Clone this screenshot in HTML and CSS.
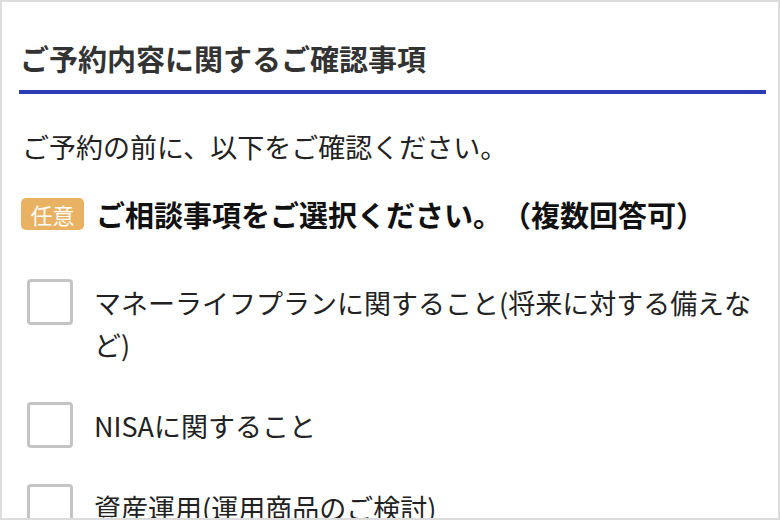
FILE: index.html
```html
<!DOCTYPE html>
<html lang="ja">
  <head>
    <meta charset="UTF-8" />
    <meta name="viewport" content="width=device-width, initial-scale=1.0" />
    <title>ご予約内容に関するご確認事項</title>
    <link rel="stylesheet" href="styles.css">
  </head>

  <body>
    <div class="page">
      <h2 class="title">ご予約内容に関するご確認事項</h2>

      <p class="intro">ご予約の前に、以下をご確認ください。</p>

      <div class="question">
        <span class="badge">任意</span>
        <span class="question-text">ご相談事項をご選択ください。（複数回答可）</span>
      </div>

      <div class="options">
        <label class="option">
          <input type="checkbox" class="check" />
          <span class="option-text">マネーライフプランに関すること(将来に対する備えなど)</span>
        </label>
        <label class="option">
          <input type="checkbox" class="check" />
          <span class="option-text">NISAに関すること</span>
        </label>
        <label class="option">
          <input type="checkbox" class="check" />
          <span class="option-text">資産運用(運用商品のご検討)</span>
        </label>
      </div>
    </div>
  </body>
</html>
```

FILE: styles.css
```css
/* 기본 스타일 */
* {
  box-sizing: border-box;
  margin: 0;
  padding: 0;
}

body {
  font-family: "Noto Sans CJK JP", "Noto Sans", sans-serif;
  color: #222;
  background: #fff;
  text-spacing-trim: space-all;
}

/* 바깥 틀 */
.page {
  width: 780px;
  height: 520px;
  border: 2px solid #dcdcdc;
  padding: 35px 12px 0 17px;
  overflow: hidden;
}

/* 제목 */
.title {
  font-size: 29px;
  line-height: 42px;
  font-weight: 700;
  color: #333;
  padding-left: 1px;
  padding-bottom: 11px;
  border-bottom: 4px solid #2b3cb6;
}

.intro {
  margin-top: 33px;
  padding-left: 3px;
  font-size: 27px;
  line-height: 39px;
  color: #222;
}

/* 질문 줄 */
.question {
  display: flex;
  align-items: center;
  gap: 12px;
  margin-top: 27px;
  padding-left: 2px;
}

.badge {
  display: inline-flex;
  align-items: center;
  justify-content: center;
  width: 63px;
  height: 32px;
  border-radius: 5px;
  background: #e9b263;
  color: #fff;
  font-size: 22px;
  font-weight: 400;
}

.question-text {
  font-size: 29px;
  line-height: 42px;
  font-weight: 700;
  color: #111;
}

/* 체크박스 목록 */
.options {
  margin-top: 44px;
  padding-left: 8px;
}

.option {
  display: flex;
  align-items: flex-start;
  gap: 21px;
  margin-bottom: 36px;
}

.check {
  appearance: none;
  flex: none;
  width: 46px;
  height: 46px;
  border: 3px solid #c4c4c4;
  border-radius: 4px;
  background: #fff;
}

.option-text {
  margin-top: 3px;
  font-size: 27px;
  line-height: 42px;
  color: #222;
}
```
